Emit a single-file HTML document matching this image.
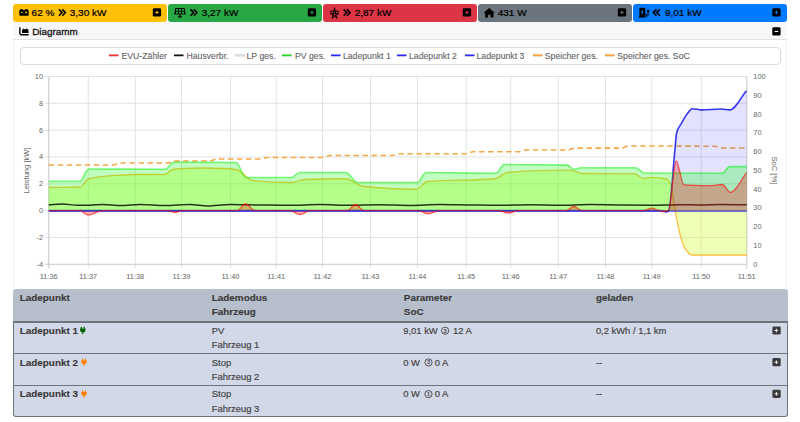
<!DOCTYPE html>
<html><head><meta charset="utf-8">
<style>
*{box-sizing:border-box;margin:0;padding:0}
html,body{width:800px;height:422px;overflow:hidden;background:#fff;font-family:"Liberation Sans",sans-serif}
.abs{position:absolute}
.box{position:absolute;top:4px;height:18px;width:153.8px;border-radius:3px;color:#000;font-size:10px;line-height:18px;white-space:nowrap}
.box .t{position:absolute;top:0}
.box .ic{position:absolute}
.ps{position:absolute;top:4.3px;width:8.3px;height:8.3px;background:#000;border-radius:1.5px}
.ps i{position:absolute;left:2px;top:3.65px;width:4.3px;height:1px}
.ps b{position:absolute;left:3.65px;top:2px;width:1px;height:4.3px}
#card{position:absolute;left:13px;top:22px;width:774px;height:266px;border-left:1px solid #f2f2f2;border-right:1px solid #f2f2f2}
#dh{position:absolute;left:13px;top:22px;width:774px;height:17.5px;background:#f7f7f9;border-bottom:1px solid #e2e2e4}
#legend{position:absolute;left:20px;top:46.5px;width:760.5px;height:18.5px;border:1px solid #dcdcdc;border-radius:4px}
.lg{position:absolute;top:49px;font-size:9px;line-height:12px;color:#666;white-space:nowrap}
.lg s{position:absolute;top:6px;width:10px;height:2px;text-decoration:none}
table{position:absolute;left:13px;top:289px;width:774.5px;border-collapse:collapse;font-size:10px;color:#3a3a3a}
.tx{position:absolute;font-size:10px;line-height:14px;color:#444;white-space:nowrap}
.b{font-weight:bold;color:#3a3a3a}
</style></head><body>

<!-- top boxes -->
<div class="box" style="left:13.1px;background:#ffc107"></div>
<div class="box" style="left:168px;background:#28a745"></div>
<div class="box" style="left:323px;background:#dc3545"></div>
<div class="box" style="left:478px;background:#6c757d"></div>
<div class="box" style="left:633px;background:#007bff"></div>

<div id="card"></div>
<div id="dh"></div>
<div id="legend"></div>
<svg class="abs" style="left:0;top:0" width="800" height="45" viewBox="0 0 800 45" font-family="Liberation Sans, sans-serif">
<!-- battery -->
<g fill="#000">
<rect x="19.3" y="9.9" width="9.4" height="5.9" rx="0.8"/>
<rect x="20.2" y="8.9" width="2.4" height="1.6" rx="0.5"/>
<rect x="25.3" y="8.9" width="2.4" height="1.6" rx="0.5"/>
</g>
<rect x="20.9" y="11.9" width="1.8" height="1" fill="#ffc107"/>
<rect x="25.2" y="11.9" width="1.8" height="1" fill="#ffc107"/>
<rect x="25.6" y="11.5" width="1" height="1.8" fill="#ffc107"/>
<!-- solar panel -->
<path d="M175.3,7.9 H184.6 L185.7,14.6 H174.2 Z" fill="#000"/>
<g fill="#28a745">
<rect x="176.1" y="8.9" width="2" height="1.9"/><rect x="179.0" y="8.9" width="2" height="1.9"/><rect x="181.9" y="8.9" width="2" height="1.9"/>
<rect x="175.9" y="11.6" width="2.2" height="2"/><rect x="179.0" y="11.6" width="2" height="2"/><rect x="181.9" y="11.6" width="2.2" height="2"/>
</g>
<rect x="179.3" y="14.5" width="1.4" height="2" fill="#000"/>
<rect x="178" y="16.3" width="4" height="1.3" rx="0.4" fill="#000"/>
<!-- tower -->
<g stroke="#000" stroke-width="1" fill="none" stroke-linecap="round">
<path d="M334.5,8.1 L332.2,18.3 M334.5,8.1 L336.8,18.3 M331.0,11.2 H338.0 M331.0,13.6 H338.0 M333.0,15.2 L336.4,17.6 M336.0,15.2 L332.6,17.6 M331.0,11.2 V12.2 M338.0,11.2 V12.2 M331.0,13.6 V14.6 M338.0,13.6 V14.6"/>
</g>
<!-- home -->
<path d="M489.2,7.9 L494.8,12.9 H493.5 V17.6 H490.6 V14.7 H488.1 V17.6 H485.1 V12.9 H483.6 Z" fill="#000"/>
<!-- charging station -->
<path d="M639.6,7.8 H644.6 Q645.3,7.8 645.3,8.5 V16.3 H645.8 V17.4 H638.9 V16.3 H639.4 V8.5 Q639.4,7.8 640.1,7.8 Z" fill="#000"/>
<path d="M642.8,9.2 L640.9,12.6 H642.2 L641.6,15.2 L643.8,11.4 H642.4 Z" fill="#007bff"/>
<path d="M645.2,13.5 Q646.3,13.5 646.4,15 Q646.6,16.4 647.5,16.2 Q648.3,16 648.1,13.2" stroke="#000" stroke-width="1" fill="none"/>
<circle cx="648.1" cy="11.1" r="1.3" fill="#000"/><rect x="647.6" y="11.4" width="1" height="2" fill="#000"/>
<!-- chevrons -->
<g stroke="#000" stroke-width="1.6" fill="none" stroke-linejoin="miter">
<path d="M58.9,9.4 L62,12.6 L58.9,15.8 M62.3,9.4 L65.4,12.6 L62.3,15.8"/>
<path d="M190.5,9.4 L193.6,12.6 L190.5,15.8 M193.9,9.4 L197,12.6 L193.9,15.8"/>
<path d="M343.6,9.4 L346.7,12.6 L343.6,15.8 M347,9.4 L350.1,12.6 L347,15.8"/>
<path d="M656.5,9.4 L653.4,12.6 L656.5,15.8 M659.9,9.4 L656.8,12.6 L659.9,15.8"/>
</g>
<!-- texts -->
<g font-size="10" fill="#000" stroke="#000" stroke-width="0.25" transform="translate(0,16.1) scale(1,0.93) translate(0,-16.1)">
<text x="31.6" y="16.1">62 %</text>
<text x="69.8" y="16.1">3,30 kW</text>
<text x="201.7" y="16.1">3,27 kW</text>
<text x="354.7" y="16.1">2,87 kW</text>
<text x="497.7" y="16.1">431 W</text>
<text x="665" y="16.1">9,01 kW</text>
</g>
<!-- plus squares -->
<g fill="#000">
<rect x="152.8" y="8.3" width="8.3" height="8.3" rx="1.4"/>
<rect x="307.8" y="8.3" width="8.3" height="8.3" rx="1.4"/>
<rect x="462.8" y="8.3" width="8.3" height="8.3" rx="1.4"/>
<rect x="617.8" y="8.3" width="8.3" height="8.3" rx="1.4"/>
<rect x="772.3" y="8.3" width="8.3" height="8.3" rx="1.4"/>
<rect x="772.3" y="27.3" width="8.3" height="8.3" rx="1.4"/>
</g>
<g stroke-width="1.1">
<path d="M155.35,12.45 H158.55 M156.95,10.85 V14.05" stroke="#ffc107"/>
<path d="M310.35,12.45 H313.55 M311.95,10.85 V14.05" stroke="#28a745"/>
<path d="M465.35,12.45 H468.55 M466.95,10.85 V14.05" stroke="#dc3545"/>
<path d="M620.35,12.45 H623.55 M621.95,10.85 V14.05" stroke="#6c757d"/>
<path d="M774.85,12.45 H778.05 M776.45,10.85 V14.05" stroke="#007bff"/>
<path d="M774.7,31.45 H778.2" stroke="#fff" stroke-width="1.2"/>
</g>
<!-- diagramm icon -->
<path d="M19.9,27.3 V33.6 Q19.9,34.7 21,34.7 H28.7" stroke="#000" stroke-width="1.4" fill="none"/>
<path d="M22.0,33.0 V30.0 L23.6,28.5 L25.0,29.6 L26.8,28.6 L28.5,30.0 V33.0 Z" fill="#000"/>
<text x="32.2" y="35" font-size="9.9" fill="#111" stroke="#111" stroke-width="0.3" transform="translate(0,35) scale(1,0.9) translate(0,-35)">Diagramm</text>
</svg>
<svg class="abs" style="left:0;top:0" width="800" height="290" viewBox="0 0 800 290" font-family="Liberation Sans, sans-serif">
<g stroke="#e2e2e2" stroke-width="1"><line x1="44.5" y1="76.50" x2="746.75" y2="76.50"/><line x1="44.5" y1="103.33" x2="746.75" y2="103.33"/><line x1="44.5" y1="130.16" x2="746.75" y2="130.16"/><line x1="44.5" y1="156.99" x2="746.75" y2="156.99"/><line x1="44.5" y1="183.81" x2="746.75" y2="183.81"/><line x1="44.5" y1="210.64" x2="746.75" y2="210.64"/><line x1="44.5" y1="237.47" x2="746.75" y2="237.47"/><line x1="44.5" y1="264.30" x2="746.75" y2="264.30"/><line x1="48.75" y1="76.50" x2="48.75" y2="268.5"/><line x1="88.25" y1="76.50" x2="88.25" y2="268.5"/><line x1="135.25" y1="76.50" x2="135.25" y2="268.5"/><line x1="181.50" y1="76.50" x2="181.50" y2="268.5"/><line x1="230.50" y1="76.50" x2="230.50" y2="268.5"/><line x1="276.25" y1="76.50" x2="276.25" y2="268.5"/><line x1="322.50" y1="76.50" x2="322.50" y2="268.5"/><line x1="370.50" y1="76.50" x2="370.50" y2="268.5"/><line x1="417.50" y1="76.50" x2="417.50" y2="268.5"/><line x1="466.25" y1="76.50" x2="466.25" y2="268.5"/><line x1="510.75" y1="76.50" x2="510.75" y2="268.5"/><line x1="558.25" y1="76.50" x2="558.25" y2="268.5"/><line x1="605.50" y1="76.50" x2="605.50" y2="268.5"/><line x1="651.75" y1="76.50" x2="651.75" y2="268.5"/><line x1="701.25" y1="76.50" x2="701.25" y2="268.5"/><line x1="746.75" y1="76.50" x2="746.75" y2="268.5"/></g>
<g stroke="#cfcfcf" stroke-width="1"><line x1="48.75" y1="76.50" x2="48.75" y2="268.5"/><line x1="746.75" y1="76.50" x2="746.75" y2="268.5"/><line x1="44.5" y1="264.30" x2="746.75" y2="264.30"/></g>
<path fill="none" stroke="#f6a746" stroke-width="1.6" stroke-dasharray="5.5,3.5" d="M48.75,165.00 C70.00,165.00 91.25,165.00 112.50,165.00 C115.00,165.00 117.50,163.00 120.00,163.00 C135.83,163.00 151.67,163.00 167.50,163.00 C170.00,163.00 172.50,161.00 175.00,161.00 C186.67,161.00 198.33,161.00 210.00,161.00 C212.33,161.00 214.67,159.00 217.00,159.00 C231.33,159.00 245.67,159.00 260.00,159.00 C262.33,159.00 264.67,157.50 267.00,157.50 C285.50,157.50 304.00,157.50 322.50,157.50 C325.00,157.50 327.50,155.50 330.00,155.50 C350.83,155.50 371.67,155.50 392.50,155.50 C395.00,155.50 397.50,153.75 400.00,153.75 C422.00,153.75 444.00,153.75 466.00,153.75 C468.33,153.75 470.67,151.75 473.00,151.75 C488.33,151.75 503.67,151.75 519.00,151.75 C521.33,151.75 523.67,150.00 526.00,150.00 C539.83,150.00 553.67,150.00 567.50,150.00 C570.00,150.00 572.50,148.10 575.00,148.10 C590.60,148.10 606.20,148.10 621.80,148.10 C623.87,148.10 625.93,146.00 628.00,146.00 C656.90,146.00 685.80,146.03 714.70,146.30 C716.93,146.32 719.17,148.00 721.40,148.00 C729.85,148.00 738.30,148.00 746.75,148.00"/>
<path fill="rgba(200,255,13,0.3)" d="M48.75,210.64 L48.75,187.50 C59.17,187.33 69.58,187.40 80.00,187.00 C82.92,186.89 85.83,179.48 88.75,178.75 C97.50,176.55 106.25,176.11 115.00,175.50 C121.67,175.03 128.33,174.50 135.00,174.50 C145.00,174.50 155.00,174.50 165.00,174.50 C167.50,174.50 170.00,169.78 172.50,169.50 C182.50,168.38 192.50,168.00 202.50,168.00 C211.67,168.00 220.83,168.25 230.00,168.75 C232.50,168.89 235.00,169.37 237.50,170.00 C242.50,171.26 247.50,179.95 252.50,180.50 C265.33,181.92 278.17,182.50 291.00,182.50 C295.67,182.50 300.33,179.68 305.00,179.50 C318.67,178.97 332.33,178.75 346.00,178.75 C351.50,178.75 357.00,185.61 362.50,186.25 C380.33,188.31 398.17,189.25 416.00,189.25 C419.83,189.25 423.67,181.87 427.50,181.50 C450.00,179.31 472.50,180.85 495.00,178.75 C499.17,178.36 503.33,172.85 507.50,172.50 C528.33,170.73 549.17,170.20 570.00,170.20 C574.17,170.20 578.33,173.46 582.50,173.50 C599.87,173.66 617.23,173.53 634.60,173.70 C637.43,173.73 640.27,178.40 643.10,178.40 C645.93,178.40 648.77,177.30 651.60,177.30 C656.60,177.30 661.60,177.75 666.60,179.00 C668.00,179.35 669.40,181.86 670.80,185.00 C672.53,188.89 674.27,206.13 676.00,215.00 C677.67,223.52 679.33,232.74 681.00,238.00 C682.67,243.26 684.33,247.91 686.00,250.00 C688.00,252.51 690.00,255.00 692.00,255.00 C710.25,255.00 728.50,255.00 746.75,255.00 L746.75,210.64 Z"/>
<path fill="none" stroke="rgba(255,165,0,0.7)" stroke-width="1.3" d="M48.75,187.50 C59.17,187.33 69.58,187.40 80.00,187.00 C82.92,186.89 85.83,179.48 88.75,178.75 C97.50,176.55 106.25,176.11 115.00,175.50 C121.67,175.03 128.33,174.50 135.00,174.50 C145.00,174.50 155.00,174.50 165.00,174.50 C167.50,174.50 170.00,169.78 172.50,169.50 C182.50,168.38 192.50,168.00 202.50,168.00 C211.67,168.00 220.83,168.25 230.00,168.75 C232.50,168.89 235.00,169.37 237.50,170.00 C242.50,171.26 247.50,179.95 252.50,180.50 C265.33,181.92 278.17,182.50 291.00,182.50 C295.67,182.50 300.33,179.68 305.00,179.50 C318.67,178.97 332.33,178.75 346.00,178.75 C351.50,178.75 357.00,185.61 362.50,186.25 C380.33,188.31 398.17,189.25 416.00,189.25 C419.83,189.25 423.67,181.87 427.50,181.50 C450.00,179.31 472.50,180.85 495.00,178.75 C499.17,178.36 503.33,172.85 507.50,172.50 C528.33,170.73 549.17,170.20 570.00,170.20 C574.17,170.20 578.33,173.46 582.50,173.50 C599.87,173.66 617.23,173.53 634.60,173.70 C637.43,173.73 640.27,178.40 643.10,178.40 C645.93,178.40 648.77,177.30 651.60,177.30 C656.60,177.30 661.60,177.75 666.60,179.00 C668.00,179.35 669.40,181.86 670.80,185.00 C672.53,188.89 674.27,206.13 676.00,215.00 C677.67,223.52 679.33,232.74 681.00,238.00 C682.67,243.26 684.33,247.91 686.00,250.00 C688.00,252.51 690.00,255.00 692.00,255.00 C710.25,255.00 728.50,255.00 746.75,255.00"/>
<line x1="48.75" y1="210.94" x2="746.75" y2="210.94" stroke="rgba(0,0,255,0.7)" stroke-width="1.6"/>
<path fill="rgba(0,0,255,0.11)" d="M48.75,210.64 L48.75,210.64 C252.50,210.64 456.25,210.64 660.00,210.64 C662.20,210.64 664.40,212.00 666.60,212.00 C667.30,212.00 668.00,211.38 668.70,210.64 C670.77,208.45 672.83,170.48 674.90,150.00 C675.47,144.38 676.03,135.10 676.60,133.00 C678.27,126.81 679.93,126.14 681.60,123.10 C683.23,120.12 684.87,116.93 686.50,114.80 C688.43,112.27 690.37,108.70 692.30,108.70 C695.37,108.70 698.43,109.90 701.50,109.90 C708.13,109.90 714.77,109.00 721.40,109.00 C724.17,109.00 726.93,109.90 729.70,109.90 C735.30,109.90 740.90,97.17 746.50,90.80 L746.50,210.64 Z"/>
<path fill="none" stroke="rgba(20,20,240,0.85)" stroke-width="1.6" d="M48.75,210.64 C252.50,210.64 456.25,210.64 660.00,210.64 C662.20,210.64 664.40,212.00 666.60,212.00 C667.30,212.00 668.00,211.38 668.70,210.64 C670.77,208.45 672.83,170.48 674.90,150.00 C675.47,144.38 676.03,135.10 676.60,133.00 C678.27,126.81 679.93,126.14 681.60,123.10 C683.23,120.12 684.87,116.93 686.50,114.80 C688.43,112.27 690.37,108.70 692.30,108.70 C695.37,108.70 698.43,109.90 701.50,109.90 C708.13,109.90 714.77,109.00 721.40,109.00 C724.17,109.00 726.93,109.90 729.70,109.90 C735.30,109.90 740.90,97.17 746.50,90.80"/>
<path fill="rgba(10,255,13,0.26)" d="M48.75,210.64 L48.75,181.20 C59.23,181.20 69.72,181.20 80.20,181.20 C82.93,181.20 85.67,169.00 88.40,169.00 C113.93,169.00 139.47,169.25 165.00,169.25 C167.92,169.25 170.83,162.20 173.75,162.20 C194.50,162.20 215.25,162.24 236.00,162.50 C239.33,162.54 242.67,177.50 246.00,177.50 C261.00,177.50 276.00,177.50 291.00,177.50 C294.00,177.50 297.00,172.50 300.00,172.50 C315.33,172.50 330.67,172.50 346.00,172.50 C349.83,172.50 353.67,182.50 357.50,182.50 C377.50,182.50 397.50,182.50 417.50,182.50 C420.33,182.50 423.17,172.50 426.00,172.50 C449.33,172.50 472.67,173.25 496.00,173.25 C498.67,173.25 501.33,164.50 504.00,164.50 C525.17,164.50 546.33,164.56 567.50,165.10 C569.63,165.15 571.77,169.40 573.90,169.40 C576.37,169.40 578.83,167.70 581.30,167.70 C599.43,167.70 617.57,167.70 635.70,167.70 C638.53,167.70 641.37,172.98 644.20,173.00 C670.20,173.18 696.20,173.20 722.20,173.20 C724.67,173.20 727.13,166.60 729.60,166.60 C735.32,166.60 741.03,166.60 746.75,166.60 L746.75,210.64 Z"/>
<path fill="none" stroke="rgba(0,240,0,0.5)" stroke-width="1.6" d="M48.75,181.20 C59.23,181.20 69.72,181.20 80.20,181.20 C82.93,181.20 85.67,169.00 88.40,169.00 C113.93,169.00 139.47,169.25 165.00,169.25 C167.92,169.25 170.83,162.20 173.75,162.20 C194.50,162.20 215.25,162.24 236.00,162.50 C239.33,162.54 242.67,177.50 246.00,177.50 C261.00,177.50 276.00,177.50 291.00,177.50 C294.00,177.50 297.00,172.50 300.00,172.50 C315.33,172.50 330.67,172.50 346.00,172.50 C349.83,172.50 353.67,182.50 357.50,182.50 C377.50,182.50 397.50,182.50 417.50,182.50 C420.33,182.50 423.17,172.50 426.00,172.50 C449.33,172.50 472.67,173.25 496.00,173.25 C498.67,173.25 501.33,164.50 504.00,164.50 C525.17,164.50 546.33,164.56 567.50,165.10 C569.63,165.15 571.77,169.40 573.90,169.40 C576.37,169.40 578.83,167.70 581.30,167.70 C599.43,167.70 617.57,167.70 635.70,167.70 C638.53,167.70 641.37,172.98 644.20,173.00 C670.20,173.18 696.20,173.20 722.20,173.20 C724.67,173.20 727.13,166.60 729.60,166.60 C735.32,166.60 741.03,166.60 746.75,166.60"/>
<path fill="none" stroke="rgba(0,0,0,0.8)" stroke-width="1.5" d="M48.75,204.75 C53.33,204.50 57.92,204.00 62.50,204.00 C67.50,204.00 72.50,205.25 77.50,205.25 C81.67,205.25 85.83,205.25 90.00,205.25 C94.17,205.25 98.33,204.40 102.50,204.40 C108.67,204.40 114.83,205.60 121.00,205.60 C127.33,205.60 133.67,204.50 140.00,204.50 C148.33,204.50 156.67,205.50 165.00,205.50 C173.33,205.50 181.67,204.50 190.00,204.50 C195.83,204.50 201.67,206.00 207.50,206.00 C215.00,206.00 222.50,204.50 230.00,204.50 C240.00,204.50 250.00,204.88 260.00,205.00 C270.00,205.12 280.00,205.30 290.00,205.30 C300.00,205.30 310.00,204.60 320.00,204.60 C330.00,204.60 340.00,205.20 350.00,205.20 C360.00,205.20 370.00,204.80 380.00,204.80 C390.00,204.80 400.00,205.40 410.00,205.40 C420.00,205.40 430.00,204.60 440.00,204.60 C450.00,204.60 460.00,204.89 470.00,205.00 C480.00,205.11 490.00,205.30 500.00,205.30 C510.00,205.30 520.00,204.80 530.00,204.80 C540.00,204.80 550.00,205.20 560.00,205.20 C570.00,205.20 580.00,204.60 590.00,204.60 C600.00,204.60 610.00,204.91 620.00,205.00 C630.00,205.09 640.00,205.20 650.00,205.20 C660.00,205.20 670.00,204.70 680.00,204.70 C686.67,204.70 693.33,205.00 700.00,205.00 C706.67,205.00 713.33,204.50 720.00,204.50 C728.92,204.50 737.83,204.70 746.75,204.80"/>
<path fill="rgba(255,10,13,0.3)" d="M48.75,210.64 L48.75,210.64 C59.17,210.64 69.58,210.64 80.00,210.64 C82.80,210.64 85.60,215.20 88.40,215.20 C92.27,215.20 96.13,211.81 100.00,211.20 C101.67,210.94 103.33,210.64 105.00,210.64 C126.00,210.64 147.00,210.64 168.00,210.64 C170.33,210.64 172.67,212.50 175.00,212.50 C177.33,212.50 179.67,210.64 182.00,210.64 C200.33,210.64 218.67,210.64 237.00,210.64 C239.83,210.64 242.67,203.75 245.50,203.75 C248.67,203.75 251.83,210.64 255.00,210.64 C266.67,210.64 278.33,210.64 290.00,210.64 C293.33,210.64 296.67,214.50 300.00,214.50 C303.33,214.50 306.67,210.64 310.00,210.64 C322.33,210.64 334.67,210.64 347.00,210.64 C349.83,210.64 352.67,204.50 355.50,204.50 C358.33,204.50 361.17,210.64 364.00,210.64 C382.00,210.64 400.00,210.64 418.00,210.64 C421.33,210.64 424.67,213.75 428.00,213.75 C432.00,213.75 436.00,210.64 440.00,210.64 C459.33,210.64 478.67,210.64 498.00,210.64 C501.58,210.64 505.17,213.00 508.75,213.00 C511.83,213.00 514.92,210.64 518.00,210.64 C534.00,210.64 550.00,210.64 566.00,210.64 C568.63,210.64 571.27,206.50 573.90,206.50 C576.60,206.50 579.30,210.64 582.00,210.64 C602.67,210.64 623.33,210.64 644.00,210.64 C646.53,210.64 649.07,208.20 651.60,208.20 C654.07,208.20 656.53,210.02 659.00,210.64 C660.33,210.98 661.67,211.50 663.00,211.50 C664.77,211.50 666.53,211.17 668.30,210.64 C670.93,209.86 673.57,160.80 676.20,160.80 C678.80,160.80 681.40,184.61 684.00,184.80 C692.57,185.44 701.13,185.60 709.70,185.60 C713.87,185.60 718.03,184.50 722.20,184.50 C724.93,184.50 727.67,192.30 730.40,192.30 C735.85,192.30 741.30,179.03 746.75,172.40 L746.75,210.64 Z"/>
<path fill="none" stroke="rgba(255,0,0,0.6)" stroke-width="1.3" d="M48.75,210.64 C59.17,210.64 69.58,210.64 80.00,210.64 C82.80,210.64 85.60,215.20 88.40,215.20 C92.27,215.20 96.13,211.81 100.00,211.20 C101.67,210.94 103.33,210.64 105.00,210.64 C126.00,210.64 147.00,210.64 168.00,210.64 C170.33,210.64 172.67,212.50 175.00,212.50 C177.33,212.50 179.67,210.64 182.00,210.64 C200.33,210.64 218.67,210.64 237.00,210.64 C239.83,210.64 242.67,203.75 245.50,203.75 C248.67,203.75 251.83,210.64 255.00,210.64 C266.67,210.64 278.33,210.64 290.00,210.64 C293.33,210.64 296.67,214.50 300.00,214.50 C303.33,214.50 306.67,210.64 310.00,210.64 C322.33,210.64 334.67,210.64 347.00,210.64 C349.83,210.64 352.67,204.50 355.50,204.50 C358.33,204.50 361.17,210.64 364.00,210.64 C382.00,210.64 400.00,210.64 418.00,210.64 C421.33,210.64 424.67,213.75 428.00,213.75 C432.00,213.75 436.00,210.64 440.00,210.64 C459.33,210.64 478.67,210.64 498.00,210.64 C501.58,210.64 505.17,213.00 508.75,213.00 C511.83,213.00 514.92,210.64 518.00,210.64 C534.00,210.64 550.00,210.64 566.00,210.64 C568.63,210.64 571.27,206.50 573.90,206.50 C576.60,206.50 579.30,210.64 582.00,210.64 C602.67,210.64 623.33,210.64 644.00,210.64 C646.53,210.64 649.07,208.20 651.60,208.20 C654.07,208.20 656.53,210.02 659.00,210.64 C660.33,210.98 661.67,211.50 663.00,211.50 C664.77,211.50 666.53,211.17 668.30,210.64 C670.93,209.86 673.57,160.80 676.20,160.80 C678.80,160.80 681.40,184.61 684.00,184.80 C692.57,185.44 701.13,185.60 709.70,185.60 C713.87,185.60 718.03,184.50 722.20,184.50 C724.93,184.50 727.67,192.30 730.40,192.30 C735.85,192.30 741.30,179.03 746.75,172.40"/>
<g fill="#666" font-size="7.4"><text x="43" y="79.00" text-anchor="end">10</text><text x="43" y="105.83" text-anchor="end">8</text><text x="43" y="132.66" text-anchor="end">6</text><text x="43" y="159.49" text-anchor="end">4</text><text x="43" y="186.31" text-anchor="end">2</text><text x="43" y="213.14" text-anchor="end">0</text><text x="43" y="239.97" text-anchor="end">-2</text><text x="43" y="266.80" text-anchor="end">-4</text><text x="753.3" y="79.00">100</text><text x="753.3" y="97.78">90</text><text x="753.3" y="116.56">80</text><text x="753.3" y="135.34">70</text><text x="753.3" y="154.12">60</text><text x="753.3" y="172.90">50</text><text x="753.3" y="191.68">40</text><text x="753.3" y="210.46">30</text><text x="753.3" y="229.24">20</text><text x="753.3" y="248.02">10</text><text x="753.3" y="266.80">0</text><text x="48.75" y="278.5" text-anchor="middle">11:36</text><text x="88.25" y="278.5" text-anchor="middle">11:37</text><text x="135.25" y="278.5" text-anchor="middle">11:38</text><text x="181.50" y="278.5" text-anchor="middle">11:39</text><text x="230.50" y="278.5" text-anchor="middle">11:40</text><text x="276.25" y="278.5" text-anchor="middle">11:41</text><text x="322.50" y="278.5" text-anchor="middle">11:42</text><text x="370.50" y="278.5" text-anchor="middle">11:43</text><text x="417.50" y="278.5" text-anchor="middle">11:44</text><text x="466.25" y="278.5" text-anchor="middle">11:45</text><text x="510.75" y="278.5" text-anchor="middle">11:46</text><text x="558.25" y="278.5" text-anchor="middle">11:47</text><text x="605.50" y="278.5" text-anchor="middle">11:48</text><text x="651.75" y="278.5" text-anchor="middle">11:49</text><text x="701.25" y="278.5" text-anchor="middle">11:50</text><text x="746.75" y="278.5" text-anchor="middle">11:51</text><text transform="translate(28.8,170.4) rotate(-90)" text-anchor="middle" font-size="7.6">Leistung [kW]</text><text transform="translate(772,170.4) rotate(90)" text-anchor="middle" font-size="7.6">SoC [%]</text></g>
<g fill="#666" font-size="8.7" stroke="#666" stroke-width="0.12"><rect x="109.00" y="54.5" width="9.5" height="1.7" fill="#ff3030"/><text x="121.50" y="58.9">EVU-Zähler</text><rect x="174.00" y="54.5" width="9.5" height="1.7" fill="#111"/><text x="186.50" y="58.9">Hausverbr.</text><rect x="235.00" y="54.5" width="9.5" height="1.7" fill="#dedede"/><text x="246.50" y="58.9">LP ges.</text><rect x="282.00" y="54.5" width="9.5" height="1.7" fill="#22e022"/><text x="295.00" y="58.9">PV ges.</text><rect x="331.00" y="54.5" width="9.5" height="1.7" fill="#2a2aff"/><text x="342.90" y="58.9">Ladepunkt 1</text><rect x="397.00" y="54.5" width="9.5" height="1.7" fill="#2a2aff"/><text x="409.00" y="58.9">Ladepunkt 2</text><rect x="465.00" y="54.5" width="9.5" height="1.7" fill="#2a2aff"/><text x="476.50" y="58.9">Ladepunkt 3</text><rect x="533.00" y="54.5" width="9.5" height="1.7" fill="#ffa830"/><text x="544.80" y="58.9">Speicher ges.</text><rect x="605.00" y="54.5" width="9.5" height="1.7" fill="#ffa830"/><text x="617.30" y="58.9">Speicher ges. SoC</text></g>
</svg>

<!-- table -->
<div class="abs" style="left:13px;top:289px;width:774.5px;height:32px;background:#b8bfcc;border-radius:3px 3px 0 0"></div>
<div class="abs" style="left:13px;top:321px;width:774.5px;height:96px;background:#d3d8e8;border:1px solid #6e737c;border-top:2px solid #6e737c;border-radius:0 0 3px 3px"></div>
<div class="abs" style="left:13px;top:353px;width:774.5px;height:1px;background:#6e737c"></div>
<div class="abs" style="left:13px;top:385px;width:774.5px;height:1px;background:#6e737c"></div>

<svg class="abs" style="left:0;top:280px" width="800" height="142" viewBox="0 280 800 142" font-family="Liberation Sans, sans-serif">
<g font-size="9.9" font-weight="bold" fill="#3a3a3a" stroke="#3a3a3a" stroke-width="0.15" transform="scale(1,0.88)">
<text x="19.75" y="342.16">Ladepunkt</text><text x="211.8" y="342.16">Lademodus</text><text x="211.8" y="358.18">Fahrzeug</text><text x="403.8" y="342.16">Parameter</text><text x="403.8" y="358.18">SoC</text><text x="595.9" y="342.16">geladen</text>
<text x="19.75" y="379.55">Ladepunkt 1</text>
<text x="19.75" y="415.57">Ladepunkt 2</text>
<text x="19.75" y="451.59">Ladepunkt 3</text>
</g>
<g font-size="9.4" fill="#444" stroke="#444" stroke-width="0.2" transform="scale(1,0.88)">
<text x="211.8" y="379.55">PV</text><text x="211.8" y="395.68">Fahrzeug 1</text>
<text x="403.3" y="379.55">9,01 kW</text>
<text x="595.9" y="379.55">0,2 kWh / 1,1 km</text>
<text x="211.8" y="415.57">Stop</text><text x="211.8" y="431.70">Fahrzeug 2</text>
<text x="403.3" y="415.57">0 W</text>
<text x="595.9" y="415.57">--</text>
<text x="211.8" y="451.59">Stop</text><text x="211.8" y="467.73">Fahrzeug 3</text>
<text x="403.3" y="451.59">0 W</text>
<text x="595.9" y="451.59">--</text>
<text x="453" y="379.55">12 A</text><text x="434.8" y="415.57">0 A</text><text x="434.8" y="451.59">0 A</text>
</g>
<circle cx="445.10" cy="330.70" r="3.6" fill="none" stroke="#444" stroke-width="0.9"/><text x="445.10" y="332.50" font-size="5.6" font-weight="bold" text-anchor="middle" fill="#444">3</text><circle cx="428.50" cy="362.40" r="3.6" fill="none" stroke="#444" stroke-width="0.9"/><text x="428.50" y="364.20" font-size="5.6" font-weight="bold" text-anchor="middle" fill="#444">3</text><circle cx="428.50" cy="394.10" r="3.6" fill="none" stroke="#444" stroke-width="0.9"/><text x="428.50" y="395.90" font-size="5.6" font-weight="bold" text-anchor="middle" fill="#444">1</text>
<g fill="#006400"><rect x="80.80" y="326.80" width="1.2" height="2.2" rx="0.4"/><rect x="83.50" y="326.80" width="1.2" height="2.2" rx="0.4"/><path d="M80.00,328.60 H85.50 V330.00 Q85.50,332.00 83.30,332.60 V334.30 H82.20 V332.60 Q80.00,332.00 80.00,330.00 Z"/></g><g fill="#ff8000"><rect x="82.10" y="358.50" width="1.2" height="2.2" rx="0.4"/><rect x="84.80" y="358.50" width="1.2" height="2.2" rx="0.4"/><path d="M81.30,360.30 H86.80 V361.70 Q86.80,363.70 84.60,364.30 V366.00 H83.50 V364.30 Q81.30,363.70 81.30,361.70 Z"/></g><g fill="#ff8000"><rect x="82.10" y="390.20" width="1.2" height="2.2" rx="0.4"/><rect x="84.80" y="390.20" width="1.2" height="2.2" rx="0.4"/><path d="M81.30,392.00 H86.80 V393.40 Q86.80,395.40 84.60,396.00 V397.70 H83.50 V396.00 Q81.30,395.40 81.30,393.40 Z"/></g>
<rect x="772.4" y="326.40" width="8.3" height="8.2" rx="1.4" fill="#3a3a3a"/><path d="M774.6,330.50 H778.2 M776.4,328.70 V332.30" stroke="#fff" stroke-width="0.9"/>
<rect x="772.4" y="358.10" width="8.3" height="8.2" rx="1.4" fill="#3a3a3a"/><path d="M774.6,362.20 H778.2 M776.4,360.40 V364.00" stroke="#fff" stroke-width="0.9"/>
<rect x="772.4" y="389.80" width="8.3" height="8.2" rx="1.4" fill="#3a3a3a"/><path d="M774.6,393.90 H778.2 M776.4,392.10 V395.70" stroke="#fff" stroke-width="0.9"/>
</svg>
</body></html>
